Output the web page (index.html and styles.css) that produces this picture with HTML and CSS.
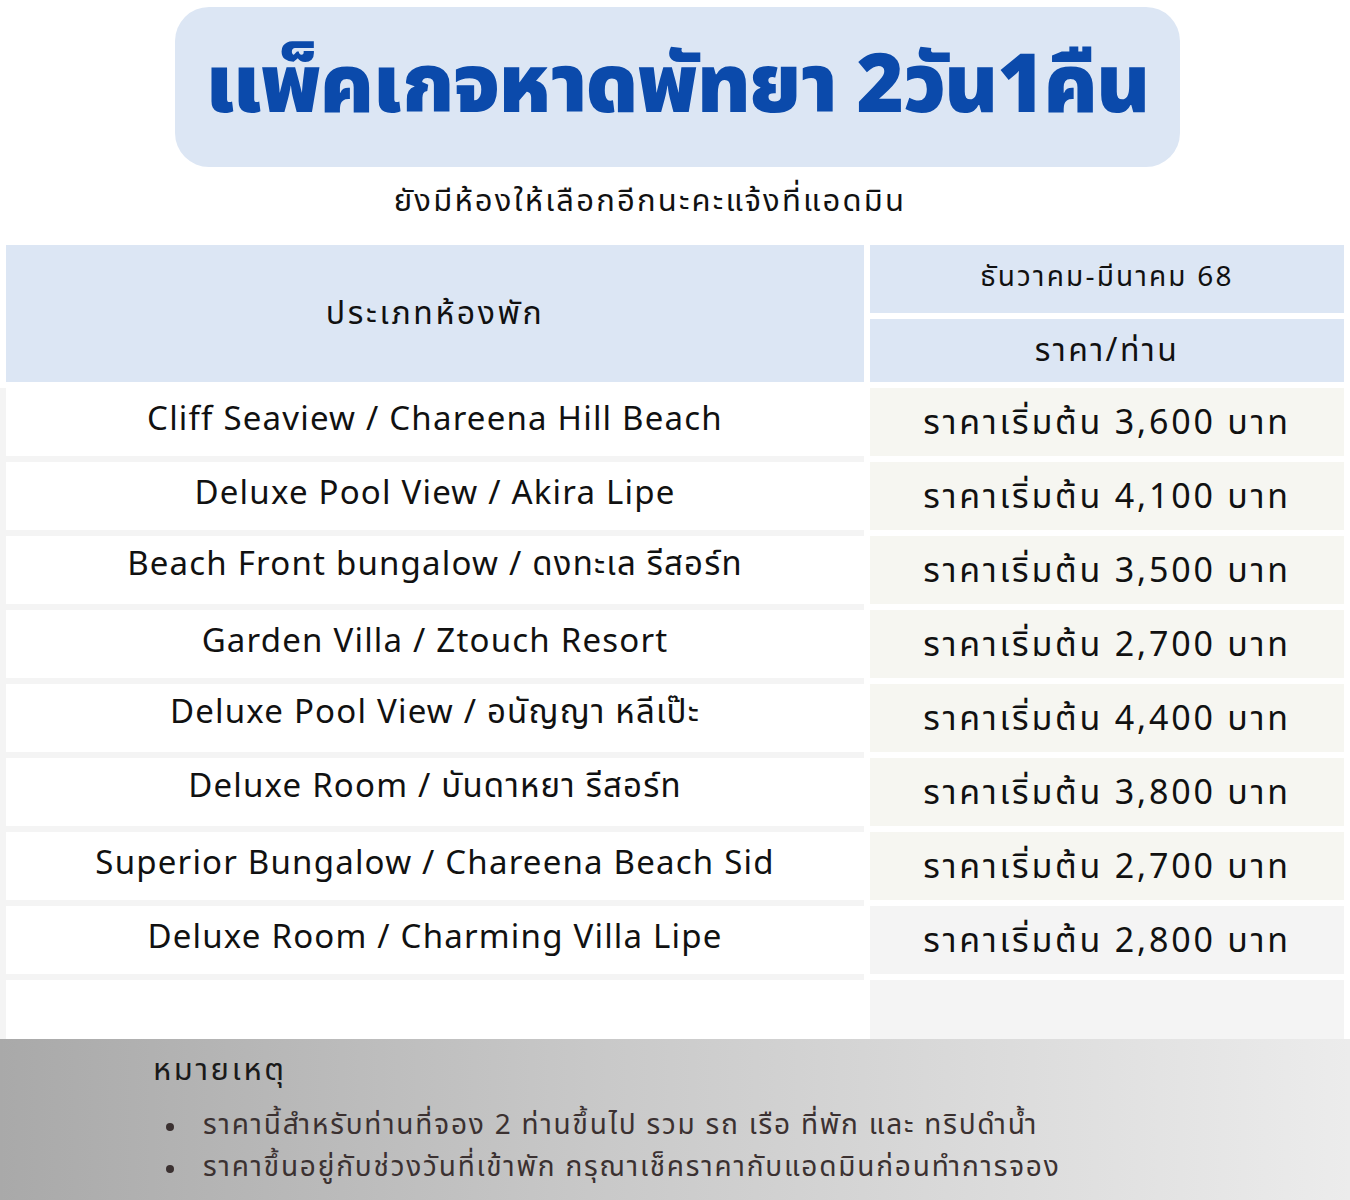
FILE: index.html
```html
<!DOCTYPE html>
<html lang="th">
<head>
<meta charset="utf-8">
<title>แพ็คเกจหาดพัทยา 2วัน1คืน</title>
<link rel="stylesheet" href="styles.css">
</head>
<body>
<div class="page">
  <header class="title-box">
    <h1 class="title">แพ็คเกจหาดพัทยา 2วัน1คืน</h1>
  </header>
  <p class="subtitle">ยังมีห้องให้เลือกอีกนะคะแจ้งที่แอดมิน</p>

  <section class="table">
    <div class="thead">
      <div class="th th-room">ประเภทห้องพัก</div>
      <div class="th-col">
        <div class="th th-period">ธันวาคม-มีนาคม 68</div>
        <div class="th th-price">ราคา/ท่าน</div>
      </div>
    </div>
    <div class="tbody">
      <div class="col-rooms">
        <div class="cell room">Cliff Seaview / Chareena Hill Beach</div>
        <div class="cell room">Deluxe Pool View / Akira Lipe</div>
        <div class="cell room">Beach Front bungalow / ดงทะเล รีสอร์ท</div>
        <div class="cell room">Garden Villa / Ztouch Resort</div>
        <div class="cell room">Deluxe Pool View / อนัญญา หลีเป๊ะ</div>
        <div class="cell room">Deluxe Room / บันดาหยา รีสอร์ท</div>
        <div class="cell room">Superior Bungalow / Chareena Beach Sid</div>
        <div class="cell room">Deluxe Room / Charming Villa Lipe</div>
        <div class="cell room empty"></div>
      </div>
      <div class="col-prices">
        <div class="cell price">ราคาเริ่มต้น 3,600 บาท</div>
        <div class="cell price">ราคาเริ่มต้น 4,100 บาท</div>
        <div class="cell price">ราคาเริ่มต้น 3,500 บาท</div>
        <div class="cell price">ราคาเริ่มต้น 2,700 บาท</div>
        <div class="cell price">ราคาเริ่มต้น 4,400 บาท</div>
        <div class="cell price">ราคาเริ่มต้น 3,800 บาท</div>
        <div class="cell price">ราคาเริ่มต้น 2,700 บาท</div>
        <div class="cell price grey">ราคาเริ่มต้น 2,800 บาท</div>
        <div class="cell price grey empty"></div>
      </div>
    </div>
  </section>

  <footer class="note">
    <h2 class="note-title">หมายเหตุ</h2>
    <ul class="note-list">
      <li>ราคานี้สำหรับท่านที่จอง 2 ท่านขึ้นไป รวม รถ เรือ ที่พัก และ ทริปดำน้ำ</li>
      <li>ราคาขึ้นอยู่กับช่วงวันที่เข้าพัก กรุณาเช็คราคากับแอดมินก่อนทำการจอง</li>
    </ul>
  </footer>
</div>
</body>
</html>
```
FILE: styles.css
```css
* { box-sizing: border-box; }
html, body { margin: 0; padding: 0; background: #ffffff; }
body {
  font-family: "Noto Sans", "Noto Sans Thai", sans-serif;
  color: #111111;
}
.page {
  width: 1350px;
  height: 1200px;
  overflow: hidden;
  padding-top: 7px;
  display: flex;
  flex-direction: column;
}
.title-box {
  margin-left: 175px;
  width: 1005px;
  height: 160px;
  border-radius: 34px;
  background: #dce6f4;
  display: flex;
  align-items: center;
  justify-content: center;
}
.title {
  margin: 0;
  font-family: "Noto Sans Thai", "Noto Sans", sans-serif;
  font-weight: 900;
  font-size: 81px;
  line-height: 1;
  color: #0b4aab;
  letter-spacing: -1px;
}
.subtitle {
  margin: 0;
  height: 78px;
  width: 1300px;
  text-align: center;
  font-family: "Noto Sans Thai", "Noto Sans", sans-serif;
  font-size: 31px;
  letter-spacing: 2.2px;
  line-height: 1;
  padding-top: 19px;
  color: #111;
}
.table { display: flex; flex-direction: column; gap: 6px; }
.thead { display: flex; height: 137px; }
.th {
  background: #dce6f4;
  display: flex;
  align-items: center;
  justify-content: center;
  font-family: "Noto Sans Thai", "Noto Sans", sans-serif;
  color: #111;
}
.th-room {
  margin-left: 6px;
  width: 858px;
  font-size: 32px;
  letter-spacing: 2.6px;
}
.th-col {
  margin-left: 6px;
  width: 474px;
  display: flex;
  flex-direction: column;
  gap: 6px;
}
.th-period { height: 68px; font-size: 28px; letter-spacing: 2.2px; padding-bottom: 4px; }
.th-price { height: 63px; font-size: 32px; letter-spacing: 2.4px; }
.tbody { display: flex; }
.col-rooms {
  width: 864px;
  background: #f4f4f4;
  padding-left: 6px;
  display: flex;
  flex-direction: column;
  gap: 6px;
}
.col-prices {
  margin-left: 6px;
  width: 474px;
  display: flex;
  flex-direction: column;
  gap: 6px;
}
.cell {
  height: 68px;
  display: flex;
  justify-content: center;
  align-items: center;
  color: #111;
}
.room { background: #ffffff; font-size: 33px; letter-spacing: 1.2px; padding-bottom: 10px; }
.price {
  background: #f6f6f1;
  font-size: 34px;
  letter-spacing: 2.8px;
  padding-top: 2px;
}
.price.grey { background: #f4f4f4; }
.cell.empty { height: 59px; }
.note {
  height: 161px;
  background: linear-gradient(to right, #a9a9a9 0%, #c9c9c9 45%, #ececec 100%);
  padding-left: 153px;
  padding-top: 12px;
  font-family: "Noto Sans Thai", "Noto Sans", sans-serif;
}
.note-title {
  margin: 0;
  font-size: 31px;
  font-weight: 400;
  letter-spacing: 2.6px;
  line-height: 1.3;
  color: #1a1a1a;
}
.note-list {
  list-style: none;
  margin: 14px 0 0 13px;
  padding: 0;
  font-size: 28px;
  letter-spacing: 1.8px;
  line-height: 42px;
  color: #3b3131;
}
.note-list li { display: flex; align-items: center; }
.note-list li::before {
  content: "";
  flex: none;
  width: 8px;
  height: 8px;
  border-radius: 50%;
  background: #3b3131;
  margin-right: 29px;
  margin-top: 2px;
}
```
